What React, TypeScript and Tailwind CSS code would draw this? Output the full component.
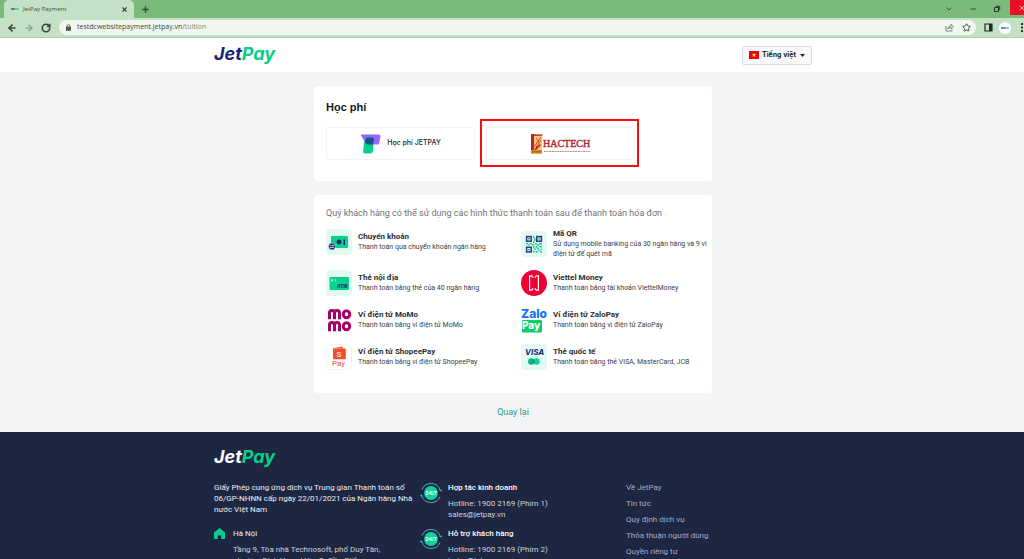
import type { ReactNode } from "react";
import { ArrowLeft, ArrowRight, ChevronDown, Minus, Plus, RotateCw, Star, X } from "lucide-react";

type Method = { title: string; text: string; icon: ReactNode };

function JetPayLogo({ dark = false }: { dark?: boolean }) {
  return (
    <svg viewBox="0 0 66 22" className="block h-[22px] w-[66px]" role="img" aria-label="JetPay">
      <text x="0" y="16" className="font-['Inter',sans-serif] text-[18px] font-bold italic">
        <tspan className={dark ? "fill-white" : "fill-[#14267a]"}>Jet</tspan>
        <tspan className="fill-[#0ccd8b]">Pay</tspan>
      </text>
    </svg>
  );
}

function TransferIcon() {
  return (
    <svg viewBox="0 0 26 26" className="size-[26px]">
      <rect width="26" height="26" rx="4" fill="#e3faf2" />
      <rect x="5" y="7" width="17" height="12" rx="1" fill="#09cf8f" />
      <circle cx="13" cy="13" r="2.4" fill="#14266b" />
      <rect x="17.5" y="10.5" width="1.5" height="5.5" fill="#14266b" />
      <circle cx="6" cy="17.5" r="3.4" fill="#14266b" stroke="#e3faf2" strokeWidth=".5" />
      <path d="M4 16.7h4l-1-1M8 18.5H4l1 1" fill="none" stroke="#fff" strokeWidth=".7" />
    </svg>
  );
}

function AtmIcon() {
  return (
    <svg viewBox="0 0 26 26" className="size-[26px]">
      <rect width="26" height="26" rx="4" fill="#e3faf2" />
      <rect x="3.5" y="7" width="19.5" height="13" rx="1" fill="#09cf8f" />
      <path d="M5 9.3h2.2v2.2H5zM9 9.3h1.2v2.2H9z" fill="#a5f0d6" />
      <path d="M4 14h7" stroke="#31dca5" strokeWidth=".6" />
      <text x="11" y="18.2" className="fill-[#14266b] font-['Liberation_Sans',sans-serif] text-[5px] font-bold">
        ATM
      </text>
    </svg>
  );
}

function QrIcon() {
  return (
    <svg viewBox="0 0 26 26" className="size-[26px]">
      <rect width="26" height="26" rx="4" fill="#e3faf2" />
      <g fill="#fff" stroke="#1d3c78" strokeWidth="1.5">
        <rect x="5.6" y="5.6" width="4.6" height="4.6" />
        <rect x="15.8" y="5.6" width="4.6" height="4.6" />
        <rect x="5.6" y="16.3" width="4.6" height="4.6" />
      </g>
      <path d="M7.2 7.2h1.4v1.4H7.2zM17.4 7.2h1.4v1.4h-1.4zM7.2 17.9h1.4v1.4H7.2z" fill="#1d3c78" />
      <path
        d="M12 5h1.5v2H12zM13 7h1.5v3H13zM12 10h1.3v2H12zM5 12h2v1.5H5zM7 13.2h2v1.3H7zM9 12h2v1.5H9zM11 13.2h2v1.5h-2zM14 12h2v1.5h-2zM16 13.2h2v1.5h-2zM18 12h3v1.5h-3zM12 15.2h1.5v2.4H12zM14.5 15h1.7v1.7h-1.7zM18.5 15h2.5v1.5h-2.5zM13.3 17.5h2v1.3h-2zM16 16.5h2v1.7h-2zM12 19.6h1.5v2H12zM14.6 20h2.2v1.6h-2.2zM17.5 18.6h1.6v1.6h-1.6zM19.6 17.5h1.5v1.6h-1.5zM19.3 20.2h1.8v1.5h-1.8z"
        fill="#10cf92"
      />
    </svg>
  );
}

function ViettelIcon() {
  return (
    <svg viewBox="0 0 26 26" className="size-[26px]">
      <circle cx="13" cy="13" r="13" fill="#ee0033" />
      <path
        d="M12.2 7.6l-1.4-1.700H8.600v14.200h2.200l1.400-1.700M13.800 7.600l1.400-1.700h2.200v14.200h-2.200l-1.400-1.700"
        fill="none"
        stroke="#fff"
        strokeWidth="1.2"
      />
    </svg>
  );
}

// one "m" and "o" pair, repeated on both lines of the mark
function MomoRow({ y }: { y: number }) {
  return (
    <g transform={`translate(0 ${y})`} fill="none" stroke="#a50064" strokeWidth="3">
      <path d="M3.500 12.300V6a2.500 2.500 0 0 1 5 0V12.300M8.500 6a2.500 2.500 0 0 1 5 0V12.300" />
      <ellipse cx="20.500" cy="7.300" rx="3.200" ry="3.500" />
    </g>
  );
}

function MomoIcon() {
  return (
    <svg viewBox="0 0 26 26" className="size-[26px]">
      <MomoRow y={0} />
      <MomoRow y={12} />
    </svg>
  );
}

function ZaloPayIcon() {
  return (
    <svg viewBox="0 0 26 26" className="size-[26px]">
      <rect x="1" y="13" width="20" height="12.5" rx="1" fill="#0bcd6e" />
      <text x="0" y="11" className="fill-[#1273f5] font-['Inter',sans-serif] text-[12px] font-extrabold">
        Zalo
      </text>
      <text x="1" y="22" className="fill-white font-['Inter',sans-serif] text-[10px] font-extrabold">
        Pay
      </text>
    </svg>
  );
}

function ShopeePayIcon() {
  return (
    <svg viewBox="0 0 26 26" className="size-[26px]">
      <rect x=".5" y=".5" width="25" height="25" rx="4" fill="#fff" stroke="#f1f1f2" />
      <path d="M7 4.2l9.6-1.6.6 2H19a.8.8 0 0 1 .8.8v9a.8.8 0 0 1-.8.8H7.800a.8.8 0 0 1-.8-.8z" fill="#ee4d2d" />
      <path d="M7.600 5l9.200-1" stroke="#fff" strokeWidth=".4" />
      <text x="10.600" y="13" className="fill-white font-['Roboto',sans-serif] text-[8px]">
        S
      </text>
      <text x="6" y="22" className="fill-[#ee4d2d] font-['Roboto',sans-serif] text-[8px]">
        Pay
      </text>
    </svg>
  );
}

function VisaIcon() {
  return (
    <svg viewBox="0 0 26 26" className="size-[26px]">
      <rect width="26" height="26" rx="4" fill="#e3faf2" />
      <text x="4" y="11" className="fill-[#14266b] font-['Inter',sans-serif] text-[8px] font-bold italic">
        VISA
      </text>
      <circle cx="15.500" cy="17.500" r="3.200" fill="#0fd295" />
      <circle cx="10.300" cy="17.500" r="3.200" fill="#08b483" />
      <path d="M12.900 15.600a3.200 3.200 0 0 1 0 3.800 3.200 3.200 0 0 1 0-3.800z" fill="#078b6d" />
    </svg>
  );
}

function SupportIcon() {
  return (
    <svg viewBox="0 0 22 22" className="size-[22px] shrink-0">
      <path
        d="M2 7.500a9.700 9.700 0 0 1 18.300 1M20 14.500a9.700 9.700 0 0 1-18.300-1"
        fill="none"
        stroke="#5aa9d6"
        strokeWidth="1"
      />
      <path d="M19 8.200l2.400 1.600.4-2.400zM3 13.800L.6 12.200l-.4 2.400z" fill="#5aa9d6" />
      <circle cx="11" cy="11" r="6.900" fill="#0fd295" />
      <text x="11" y="13" textAnchor="middle" className="fill-white font-['Inter',sans-serif] text-[5px] font-bold">
        24/7
      </text>
    </svg>
  );
}

const METHODS: Method[] = [
  { title: "Chuyển khoản", text: "Thanh toán qua chuyển khoản ngân hàng", icon: <TransferIcon /> },
  { title: "Mã QR", text: "Sử dụng mobile banking của 30 ngân hàng và 9 ví điện tử để quét mã", icon: <QrIcon /> },
  { title: "Thẻ nội địa", text: "Thanh toán bằng thẻ của 40 ngân hàng", icon: <AtmIcon /> },
  { title: "Viettel Money", text: "Thanh toán bằng tài khoản ViettelMoney", icon: <ViettelIcon /> },
  { title: "Ví điện tử MoMo", text: "Thanh toán bằng ví điện tử MoMo", icon: <MomoIcon /> },
  { title: "Ví điện tử ZaloPay", text: "Thanh toán bằng ví điện tử ZaloPay", icon: <ZaloPayIcon /> },
  { title: "Ví điện tử ShopeePay", text: "Thanh toán bằng ví điện tử ShopeePay", icon: <ShopeePayIcon /> },
  { title: "Thẻ quốc tế", text: "Thanh toán bằng thẻ VISA, MasterCard, JCB", icon: <VisaIcon /> },
];

const CONTACTS = [
  { title: "Hợp tác kinh doanh", hotline: "Hotline: 1900 2169 (Phím 1)", email: "sales@jetpay.vn" },
  { title: "Hỗ trợ khách hàng", hotline: "Hotline: 1900 2169 (Phím 2)", email: "hotro@jetpay.vn" },
];

const LINKS = ["Về JetPay", "Tin tức", "Quy định dịch vụ", "Thỏa thuận người dùng", "Quyền riêng tư"];

function SiteMark() {
  return (
    <svg viewBox="0 0 8 4" className="h-1 w-2">
      <path d="M0 2h4" stroke="#3a4f92" strokeWidth="1.4" />
      <path d="M4 2h4" stroke="#25cf9b" strokeWidth="1.4" />
    </svg>
  );
}

function BrowserBar() {
  return (
    <div className="shrink-0 font-['Open_Sans','Noto_Sans',sans-serif] text-[7px] text-[#3a4a3d]">
      <div className="flex h-[18px] items-stretch bg-[#7aba7b] pl-1">
        <div className="flex w-[130px] items-center gap-1 rounded-t-[5px] bg-[#c5e1c5] pr-1.5 pl-[7px]">
          <SiteMark />
          <span className="flex-1 text-[6px]">JetPay Payment</span>
          <button aria-label="Đóng thẻ">
            <X className="size-[7px]" strokeWidth={4} />
          </button>
        </div>
        <button aria-label="Thẻ mới" className="ml-[7px]">
          <Plus className="size-[9px]" strokeWidth={4} />
        </button>
        <div className="ml-auto flex items-center">
          <button aria-label="Tìm thẻ" className="mr-4">
            <ChevronDown className="size-2" strokeWidth={3} />
          </button>
          <button aria-label="Thu nhỏ" className="mr-4">
            <Minus className="size-2" strokeWidth={3} />
          </button>
          <button aria-label="Khôi phục" className="mr-[9px]">
            <svg viewBox="0 0 8 8" className="size-2" fill="none" stroke="#26382a">
              <path d="M1.500 2.500h4v4h-4z" />
              <path d="M3 1.300h3.700V5" />
            </svg>
          </button>
          <button aria-label="Đóng" className="h-[15px] w-[14px] self-start overflow-hidden bg-[#e81123] pl-2 text-white">
            <X className="size-2" strokeWidth={2} />
          </button>
        </div>
      </div>
      <div className="flex h-5 items-center border-b border-[#a9cfa9] bg-[#c5e1c5] pl-[7px]">
        <button aria-label="Quay lại trang trước">
          <ArrowLeft className="size-[10px]" strokeWidth={4} />
        </button>
        <button aria-label="Trang sau" className="ml-[7px] text-[#85a085]">
          <ArrowRight className="size-[10px]" strokeWidth={3} />
        </button>
        <button aria-label="Tải lại" className="mr-2 ml-[7px]">
          <RotateCw className="size-[10px]" strokeWidth={4} />
        </button>
        <div className="flex h-[15px] flex-1 items-center rounded-full bg-[#eff7ef] pr-[5px] pl-[7px]">
          <svg viewBox="0 0 6 8" className="mr-1.5 h-[7px] w-[5px]">
            <path d="M0 3h6v5H0z" fill="#4f5a50" />
            <path d="M1.300 3.400V2.200a1.700 1.700 0 0 1 3.400 0v1.200" fill="none" stroke="#4f5a50" strokeWidth=".9" />
          </svg>
          <div className="flex-1">
            testdcwebsitepayment.jetpay.vn<span className="text-[#7b877c]">/tuition</span>
          </div>
          <button aria-label="Chia sẻ" className="mr-2">
            <svg viewBox="0 0 9 9" className="size-[9px]" fill="none" stroke="#5f6f60" strokeWidth=".8">
              <path d="M1 3v5h6V6.500M2.700 6c.3-2 1.600-3 3.400-3V1.300L8.600 3.700 6.100 6V4.500c-1.500 0-2.500.4-3.400 1.500z" />
            </svg>
          </button>
          <button aria-label="Đánh dấu">
            <Star className="size-[9px]" strokeWidth={2.5} />
          </button>
        </div>
        <button aria-label="Bảng bên" className="ml-2">
          <svg viewBox="0 0 9 9" className="size-[9px]">
            <path d="M1 1h7v7H1z" fill="none" stroke="#1f2a20" strokeWidth="1.200" />
            <path d="M5 1h3v7H5z" fill="#1f2a20" />
          </svg>
        </button>
        <div className="mr-[9px] ml-1.5 grid size-3 place-items-center rounded-full bg-white">
          <SiteMark />
        </div>
        <button aria-label="Trình đơn" className="w-1 overflow-hidden">
          <svg viewBox="0 0 4 9" className="h-[9px] w-1" fill="#2c382d">
            <path d="M1 0h2v2H1zM1 3.500h2v2H1zM1 7h2v2H1z" />
          </svg>
        </button>
      </div>
    </div>
  );
}

function Header() {
  return (
    <header className="h-[35px] border-b border-gray-100 bg-white pl-0.5">
      <div className="mx-auto flex h-full w-[598px] max-w-full items-center justify-between">
        <JetPayLogo />
        <button className="flex h-[19px] w-[70px] items-center justify-center gap-[3px] rounded-xs border border-[#d9dce0] bg-[#f8f9fa] font-['Inter',sans-serif] text-[7px] font-bold text-[#212529]">
          <svg viewBox="0 0 10 8" className="h-2 w-[10px]">
            <path d="M0 0h10v8H0z" fill="#ec0015" />
            <path d="M5 1.700l.6 1.600h1.700L5.900 4.400l.5 1.700L5 5.100l-1.400 1 .5-1.700-1.400-1.100h1.700z" fill="#ff0" />
          </svg>
          Tiếng việt
          <svg viewBox="0 0 5 3" className="ml-px h-[3px] w-[5px]">
            <path d="M0 0h5L2.500 3z" fill="#212529" />
          </svg>
        </button>
      </div>
    </header>
  );
}

function TuitionCard() {
  return (
    <section className="rounded-[4px] bg-white px-3 pt-[14px] pb-[21px]">
      <h1 className="font-['Liberation_Sans',Arial,sans-serif] text-[11px] leading-[14px] font-bold text-[#16181b]">
        Học phí
      </h1>
      <div className="mt-[13px] flex gap-[11px]">
        <button className="flex h-[33px] w-[149px] items-center justify-center gap-1.5 rounded-xs border border-[#f1f2f6] font-['Inter',sans-serif] text-[7px] font-medium text-[#212529]">
          <svg viewBox="0 0 21 20" className="h-5 w-[21px]">
            <path
              d="M.5.500h18.500a1.500 1.500 0 0 1 1.500 1.500l-1.200 7a2 2 0 0 1-2 1.500H8.300a3 3 0 0 1-2.700-1.600z"
              fill="#9565ff"
            />
            <path d="M7 3.500h7l-1.200 14.300a2 2 0 0 1-2 1.700H4.700a1.500 1.500 0 0 1-1.500-1.700L4 8z" fill="#07cf8c" />
            <path d="M7 3.500h5.500a1.500 1.500 0 0 1 1.500 1.700l-.7 5.300h-5a3 3 0 0 1-2.700-1.600L4.500 7z" fill="#17538b" />
          </svg>
          Học phí JETPAY
        </button>
        <button
          aria-label="HACTECH"
          className="relative flex h-[33px] w-[149px] items-center justify-center rounded-xs border border-[#f1f2f6]"
        >
          <svg viewBox="0 0 60 20" className="h-5 w-[60px]">
            <path d="M0 0h11v20H0z" fill="#f6c878" />
            <path d="M0 0h3v16H0zM3 15l6-5 1 1-5 5z" fill="#b5252c" />
            <path d="M3 0h8v1.500H3zM3 13l7-10M5 13l5-7M5 4l4 5" fill="none" stroke="#c7342f" strokeWidth=".9" />
            <path d="M0 16h11v3.500H0z" fill="#d98e24" />
            <path d="M1 17.800h9" stroke="#8b3a1c" strokeWidth=".8" strokeDasharray="1.500 .5" />
            <text
              x="12"
              y="13"
              className="fill-[#b3262b] stroke-[#b3262b] stroke-[0.4px] font-['Liberation_Serif',serif] text-[10px]"
            >
              HACTECH
            </text>
            <path d="M13 17.500h46" stroke="#c58b88" strokeWidth="1" strokeDasharray="2 .6" />
          </svg>
          <span className="absolute -top-[9px] -right-[5px] -bottom-2 -left-[7px] border-2 border-[#f60f0f]" />
        </button>
      </div>
    </section>
  );
}

function MethodsCard() {
  return (
    <section className="mt-[14px] rounded-[4px] bg-white pt-[11px] pr-1 pb-[23px] pl-3">
      <p className="text-[9px] leading-[14px] text-[#6f7378]">
        Quý khách hàng có thể sử dụng các hình thức thanh toán sau để thanh toán hóa đơn
      </p>
      <ul className="mt-[9px] grid grid-cols-[179px_1fr] items-start gap-x-4 gap-y-[11px]">
        {METHODS.map((m) => (
          <li key={m.title} className="flex items-center gap-1.5">
            <span className="shrink-0">{m.icon}</span>
            <div>
              <h2 className="text-[8px] leading-[10px] font-bold text-[#2a2d35]">{m.title}</h2>
              <p className="text-[7px] leading-[10px] text-[#3c4049]">{m.text}</p>
            </div>
          </li>
        ))}
      </ul>
    </section>
  );
}

function Footer() {
  return (
    <footer className="mt-[14px] bg-[#1d2742] pt-[15px] pl-0.5 text-[8px] leading-[11px] text-[#ced2dc]">
      <div className="mx-auto w-[598px] max-w-full">
        <JetPayLogo dark />
        <div className="mt-[13px] grid grid-cols-[200px_200px_1fr] gap-x-1.5">
          <div>
            <p className="text-[#eceef2]">
              Giấy Phép cung ứng dịch vụ Trung gian Thanh toán số 06/GP-NHNN cấp ngày 22/01/2021 của Ngân hàng Nhà
              nước Việt Nam
            </p>
            <div className="mt-[13px] flex gap-2">
              <svg viewBox="0 0 11 11" className="size-[11px] shrink-0">
                <path d="M5.500 0L11 4.500V10a1 1 0 0 1-1 1H7.200V7.500H3.800V11H1a1 1 0 0 1-1-1V4.500z" fill="#0ccd8b" />
              </svg>
              <div className="max-w-40">
                <h3 className="text-[#eceef2]">Hà Nội</h3>
                <p className="mt-[5px]">Tầng 9, Tòa nhà Technosoft, phố Duy Tân, phường Dịch Vọng Hậu, Q. Cầu Giấy</p>
              </div>
            </div>
          </div>
          <div className="flex flex-col gap-2">
            {CONTACTS.map((c) => (
              <div key={c.title} className="flex gap-1.5">
                <SupportIcon />
                <div>
                  <h3 className="font-medium text-white">{c.title}</h3>
                  <p className="mt-[5px]">{c.hotline}</p>
                  <p>{c.email}</p>
                </div>
              </div>
            ))}
          </div>
          <nav className="flex flex-col items-start gap-[5px] text-[#a6abcf]">
            {LINKS.map((l) => (
              <a key={l} href="#">
                {l}
              </a>
            ))}
          </nav>
        </div>
      </div>
    </footer>
  );
}

export default function App() {
  return (
    <div className="flex h-screen flex-col overflow-hidden font-['Roboto','Liberation_Sans',sans-serif]">
      <BrowserBar />
      <div className="min-h-0 flex-1 overflow-hidden bg-[#f2f4f6]">
        <Header />
        <div className="pl-0.5">
          <main className="mx-auto w-[398px] max-w-full pt-[13px]">
            <TuitionCard />
            <MethodsCard />
            <div className="mt-[13px] text-center text-[9px] leading-3">
              <a href="#" className="text-[#2f9d77]">
                Quay lại
              </a>
            </div>
          </main>
        </div>
        <Footer />
      </div>
    </div>
  );
}
